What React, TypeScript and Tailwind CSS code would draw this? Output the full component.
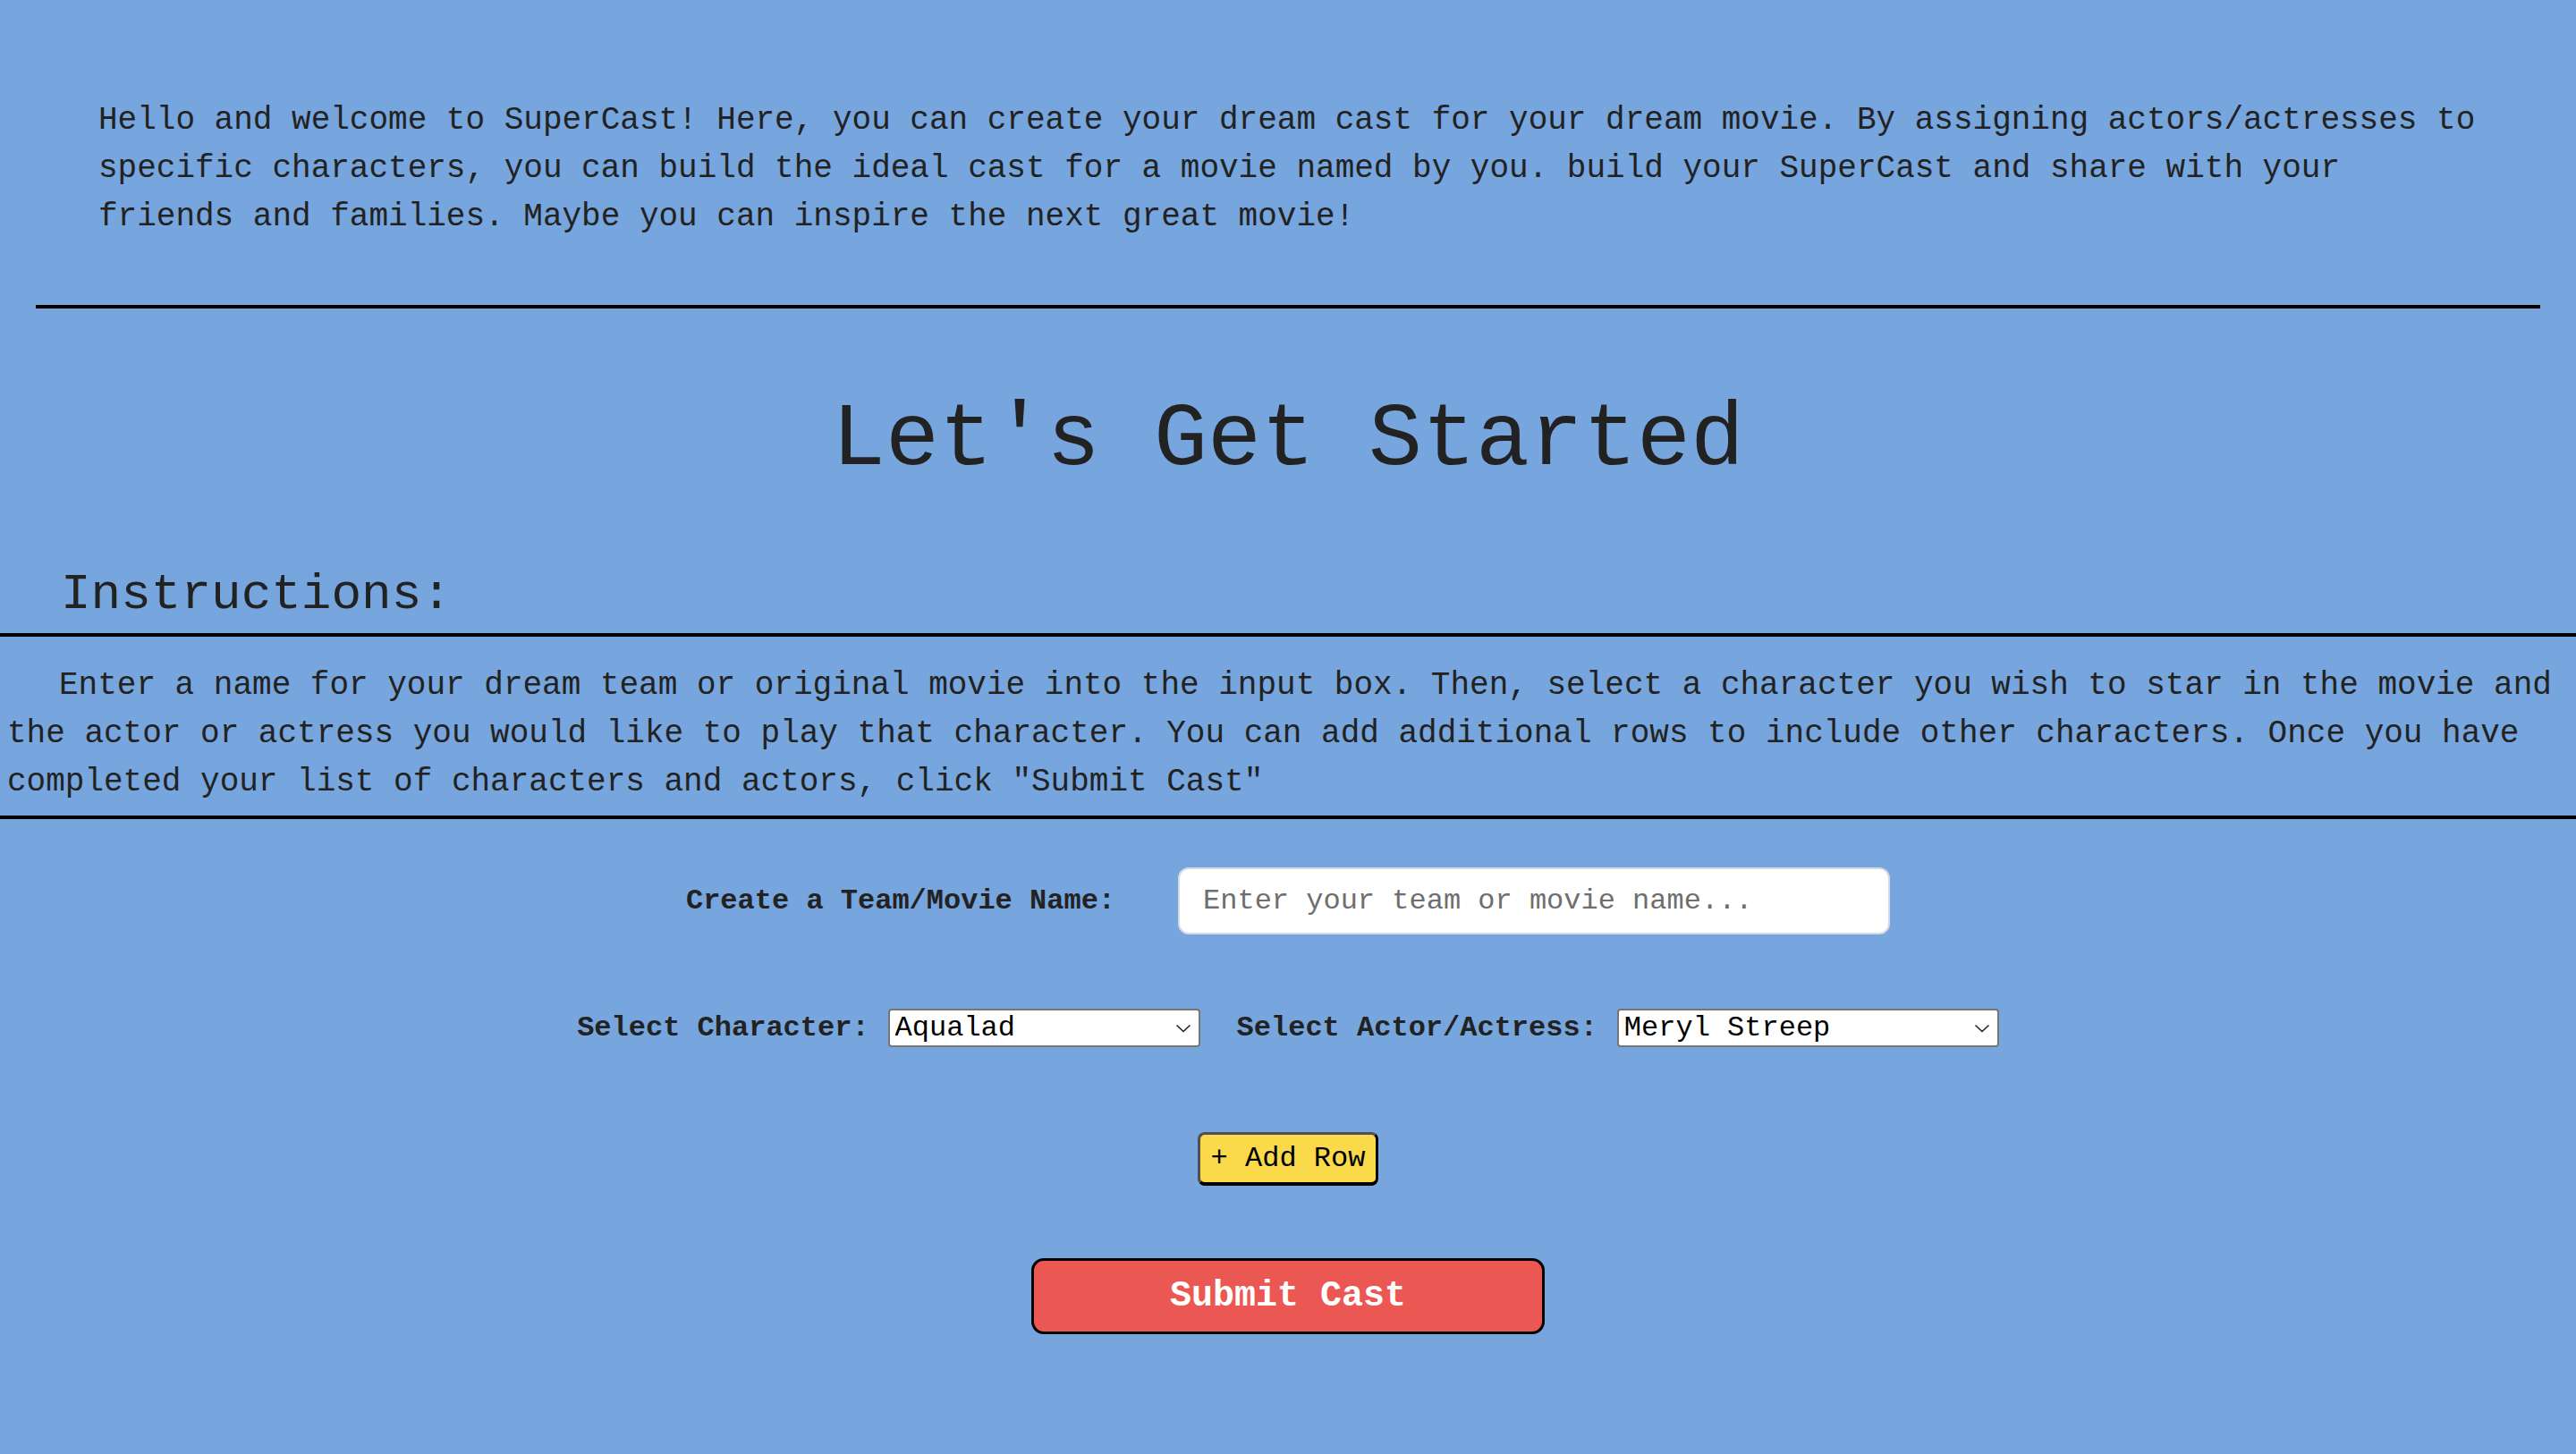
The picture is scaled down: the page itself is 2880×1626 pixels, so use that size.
import React from "react";

function Chevron() {
  return (
    <svg width="18" height="10" viewBox="0 0 18 10" className="pointer-events-none absolute right-[10px] top-1/2 -translate-y-1/2">
      <polyline points="1.5,1.5 9,8.5 16.5,1.5" fill="none" stroke="#222" strokeWidth="1.6" />
    </svg>
  );
}

function Select({ value, options, width }: { value: string; options: string[]; width: string }) {
  return (
    <div className={`relative ${width} h-[43px]`}>
      <select
        defaultValue={value}
        className="h-full w-full appearance-none rounded-[4px] border-2 border-[#767676] bg-white pl-[6px] pr-[36px] font-['Liberation_Mono',monospace] text-[32px] leading-none text-black outline-none"
      >
        {options.map((o) => (
          <option key={o} value={o}>
            {o}
          </option>
        ))}
      </select>
      <Chevron />
    </div>
  );
}

export default function App() {
  return (
    <div className="flex min-h-screen w-full flex-col bg-[#77a5dd] font-['Liberation_Mono',monospace] text-[#222]">
      <p className="px-[110px] pt-[108px] text-[36px] leading-[54px]">
        Hello and welcome to SuperCast! Here, you can create your dream cast for your dream movie. By assigning actors/actresses to specific characters, you can build the ideal cast for a movie named by you. build your SuperCast and share with your friends and families. Maybe you can inspire the next great movie!
      </p>

      <div className="mx-[40px] mt-[71px] h-[4px] bg-black" />

      <h1 className="mt-[98px] text-center text-[100px] font-normal leading-none">Let's Get Started</h1>

      <h2 className="mt-[94px] pl-[68px] text-[56px] font-normal leading-none">Instructions:</h2>

      <div className="mt-[15px] h-[4px] w-full bg-black" />

      <p className="mt-[28px] px-[8px] indent-[58px] text-[36px] leading-[54px]">
        Enter a name for your dream team or original movie into the input box. Then, select a character you wish to star in the movie and the actor or actress you would like to play that character. You can add additional rows to include other characters. Once you have completed your list of characters and actors, click "Submit Cast"
      </p>

      <div className="mt-[10px] h-[4px] w-full bg-black" />

      <div className="mt-[54px] flex items-center justify-center">
        <label className="text-[32px] font-bold leading-none">Create a Team/Movie Name:</label>
        <input
          type="text"
          placeholder="Enter your team or movie name..."
          className="ml-[70px] h-[75px] w-[796px] rounded-[12px] border-2 border-[#d3dbe6] bg-white px-[26px] font-['Liberation_Mono',monospace] text-[32px] text-black outline-none placeholder:text-[#6e6e6e]"
        />
      </div>

      <div className="mt-[83px] flex items-center justify-center">
        <label className="text-[32px] font-bold leading-none">Select Character:</label>
        <div className="ml-[21px]">
          <Select value="Aqualad" options={["Aqualad", "Batman", "Superman", "Wonder Woman"]} width="w-[349px]" />
        </div>
        <label className="ml-[41px] text-[32px] font-bold leading-none">Select Actor/Actress:</label>
        <div className="ml-[22px]">
          <Select value="Meryl Streep" options={["Meryl Streep", "Tom Hanks", "Denzel Washington"]} width="w-[427px]" />
        </div>
      </div>

      <div className="mt-[95px] flex justify-center">
        <button className="flex h-[60px] w-[202px] items-center justify-center rounded-[8px] border-[3px] border-[#505050] border-r-black border-b-[4px] border-b-black bg-[#fad94b] font-['Liberation_Mono',monospace] text-[32px] leading-none text-black">
          + Add Row
        </button>
      </div>

      <div className="mt-[81px] flex justify-center">
        <button className="flex h-[85px] w-[574px] items-center justify-center rounded-[14px] border-[3px] border-black bg-[#eb5752] font-['Liberation_Mono',monospace] text-[40px] font-bold leading-none text-white">
          Submit Cast
        </button>
      </div>
    </div>
  );
}
